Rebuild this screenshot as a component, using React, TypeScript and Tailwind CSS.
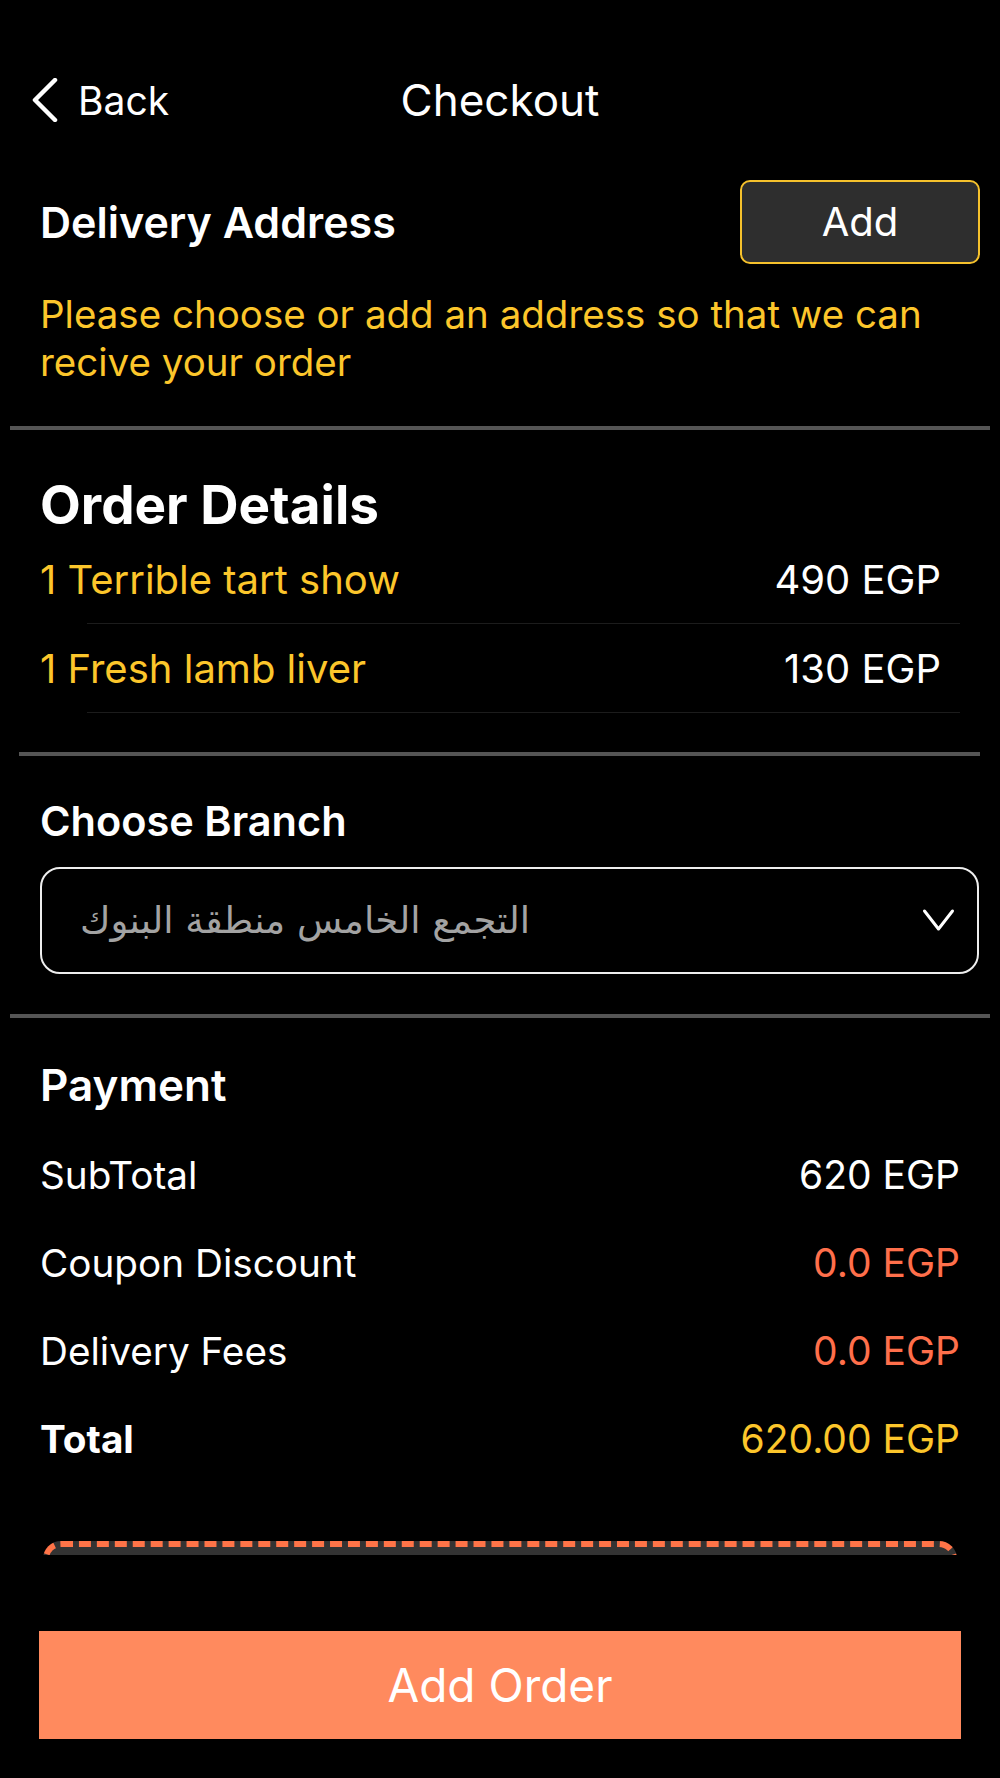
const items = [
  { name: "1 Terrible tart show", price: "490 EGP" },
  { name: "1 Fresh lamb liver", price: "130 EGP" },
];

const payments = [
  { label: "SubTotal", value: "620 EGP", tone: "text-white", bold: false },
  { label: "Coupon Discount", value: "0.0 EGP", tone: "text-[#ff6f4b]", bold: false },
  { label: "Delivery Fees", value: "0.0 EGP", tone: "text-[#ff6f4b]", bold: false },
  { label: "Total", value: "620.00 EGP", tone: "text-[#fcc62b]", bold: true },
];

const Divider = ({ inset }: { inset: string }) => (
  <div className={`h-[4px] bg-[#555555] ${inset}`} />
);

export default function App() {
  return (
    <div className="min-h-[1778px] w-full bg-black text-white font-['Inter','Noto_Sans',sans-serif] overflow-hidden">
      {/* header */}
      <div className="grid grid-cols-[1fr_auto_1fr] items-center h-[60px] mt-[70px] px-[32px]">
        <div className="flex items-center gap-[20px]">
          <svg width="26" height="44" viewBox="0 0 26 44" fill="none">
            <path d="M23 2 L3 22 L23 42" stroke="white" strokeWidth="4.5" strokeLinecap="round" strokeLinejoin="round" />
          </svg>
          <span className="text-[39px] leading-none">Back</span>
        </div>
        <h1 className="text-[44px] leading-none">Checkout</h1>
        <div />
      </div>

      {/* delivery address */}
      <div className="flex items-center justify-between mt-[50px] pl-[40px] pr-[20px]">
        <h2 className="text-[43px] font-semibold leading-none">Delivery Address</h2>
        <button className="w-[240px] h-[84px] rounded-[10px] border-[2px] border-[#f5c12c] bg-[#2e2e2e] text-[40px] leading-none text-white">
          Add
        </button>
      </div>
      <p className="mt-[26px] px-[40px] text-[38.5px] leading-[48px] text-[#fcc62b]">
        Please choose or add an address so that we can recive your order
      </p>

      <Divider inset="mx-[10px] mt-[40px]" />

      {/* order details */}
      <h2 className="mt-[46px] px-[40px] text-[53px] font-bold leading-[59px]">Order Details</h2>
      <div>
        {items.map((it) => (
          <div key={it.name} className="relative h-[89px] flex items-center justify-between pl-[40px] pr-[59px]">
            <span className="text-[40px] text-[#fcc62b]">{it.name}</span>
            <span className="text-[40px] text-white">{it.price}</span>
            <div className="absolute bottom-0 left-[87px] right-[40px] h-[1px] bg-[#1c1c1c]" />
          </div>
        ))}
      </div>

      <Divider inset="ml-[19px] mr-[20px] mt-[39px]" />

      {/* branch */}
      <h2 className="mt-[40px] px-[40px] text-[41.5px] font-semibold leading-[50px]">Choose Branch</h2>
      <div className="mx-[40px] mr-[21px] mt-[21px] h-[107px] rounded-[20px] border-[2px] border-[#eeeeee] flex items-center justify-between pl-[38px] pr-[22px]">
        <span dir="rtl" className="text-[37px] text-[#a3a3a3] font-['DejaVu_Sans',sans-serif]">
          التجمع الخامس منطقة البنوك
        </span>
        <svg width="33" height="25" viewBox="0 0 33 25" fill="none">
          <path d="M2.5 3 L16.5 21 L30.5 3" stroke="white" strokeWidth="3" strokeLinecap="round" strokeLinejoin="round" />
        </svg>
      </div>

      <Divider inset="mx-[10px] mt-[40px]" />

      {/* payment */}
      <h2 className="mt-[42px] px-[40px] text-[44px] font-semibold leading-[50px]">Payment</h2>
      <div className="mt-[21px] flex flex-col">
        {payments.map((p) => (
          <div key={p.label} className="h-[88px] flex items-center justify-between pl-[40px] pr-[40px]">
            <span className={`text-[38.7px] ${p.bold ? "font-bold" : ""}`}>{p.label}</span>
            <span className={`text-[39px] ${p.tone}`}>{p.value}</span>
          </div>
        ))}
      </div>

      {/* coupon box, cut off */}
      <div className="mt-[58px] mx-[43px] h-[14px] overflow-hidden">
        <div className="h-[80px] rounded-[18px] border-[6px] border-dashed border-[#ff7448] bg-[#333333]" />
      </div>

      <button className="block mt-[76px] mx-[39px] w-[922px] h-[108px] bg-[#ff8a5e] text-[46px] text-white leading-none">
        Add Order
      </button>
    </div>
  );
}
